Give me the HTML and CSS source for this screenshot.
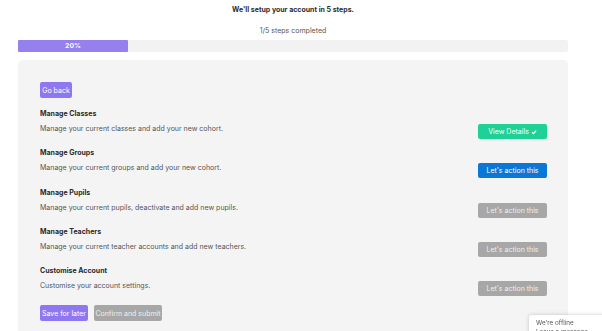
FILE: index.html
```html
<!DOCTYPE html>
<html lang="en">
<head>
    <meta charset="UTF-8">
    <meta name="viewport" content="width=device-width, initial-scale=1.0">
    <title>Account Setup</title>
    <link rel="stylesheet" href="styles.css">
</head>
<body>
    <div class="page">
        <h1 class="title">We'll setup your account in 5 steps.</h1>
        <p class="steps">1/5 steps completed</p>
        <div class="progress">
            <div class="progress-fill" style="width: 20%">20%</div>
        </div>

        <div class="card">
            <button class="btn btn-purple back-button">Go back</button>

            <div class="step">
                <div class="step-text">
                    <h3>Manage Classes</h3>
                    <p>Manage your current classes and add your new cohort.</p>
                </div>
                <button class="btn btn-green step-button">View Details <svg class="check" viewBox="0 0 10 10"><path d="M1.5 5.2 L4 7.6 L8.6 2.6" /></svg></button>
            </div>

            <div class="step">
                <div class="step-text">
                    <h3>Manage Groups</h3>
                    <p>Manage your current groups and add your new cohort.</p>
                </div>
                <button class="btn btn-blue step-button">Let's action this</button>
            </div>

            <div class="step">
                <div class="step-text">
                    <h3>Manage Pupils</h3>
                    <p>Manage your current pupils, deactivate and add new pupils.</p>
                </div>
                <button class="btn btn-grey step-button">Let's action this</button>
            </div>

            <div class="step">
                <div class="step-text">
                    <h3>Manage Teachers</h3>
                    <p>Manage your current teacher accounts and add new teachers.</p>
                </div>
                <button class="btn btn-grey step-button">Let's action this</button>
            </div>

            <div class="step">
                <div class="step-text">
                    <h3>Customise Account</h3>
                    <p>Customise your account settings.</p>
                </div>
                <button class="btn btn-grey step-button">Let's action this</button>
            </div>

            <div class="actions">
                <button class="btn btn-purple save-button">Save for later</button>
                <button class="btn btn-grey submit-button">Confirm and submit</button>
            </div>
        </div>
    </div>

    <div class="chat-widget">
        <p>We're offline</p>
        <p>Leave a message</p>
    </div>
</body>
</html>
```

FILE: styles.css
```css
body {
    font-family: Inter, "Open Sans", sans-serif;
    margin: 0;
    padding: 0;
    background-color: #fff;
    color: #333;
    overflow: hidden;
}
.page {
    width: 550px;
    margin-left: 18px;
}
.title {
    margin: 0;
    padding-top: 5px;
    font-size: 7px;
    line-height: 10px;
    font-weight: 700;
    text-align: center;
    color: #2b2b2b;
}
.steps {
    margin: 11px 0 0;
    font-size: 7px;
    line-height: 10px;
    text-align: center;
    color: #555;
}
.progress {
    margin-top: 4px;
    height: 12px;
    background-color: #f2f2f2;
    border-radius: 2px;
}
.progress-fill {
    height: 12px;
    background-color: #9580ee;
    color: white;
    font-size: 6.8px;
    font-weight: 700;
    line-height: 12px;
    text-align: center;
    border-radius: 1px;
}
.card {
    margin-top: 8px;
    height: 300px;
    background-color: #f4f4f4;
    border-radius: 5px;
    padding: 22px 21px 0 22px;
}
.btn {
    border: none;
    border-radius: 2px;
    color: white;
    font-family: inherit;
    font-size: 7px;
    height: 16px;
    padding: 0;
    cursor: pointer;
}
.btn-purple {
    background-color: #9077f2;
}
.btn-green {
    background-color: #1ed196;
}
.btn-blue {
    background-color: #0a77d6;
}
.btn-grey {
    background-color: #a7a7a7;
    color: #eee;
}
.back-button {
    width: 32px;
    display: block;
    margin-bottom: 11px;
}
.step {
    display: flex;
    justify-content: space-between;
    align-items: flex-start;
    height: 25px;
    margin-bottom: 14.3px;
}
.step-text h3 {
    margin: 0;
    font-size: 7px;
    line-height: 10px;
    font-weight: 700;
    color: #2b2b2b;
}
.step-text p {
    margin: 5px 0 0;
    font-size: 7px;
    line-height: 10px;
    color: #555;
}
.step-button {
    width: 69px;
    height: 15px;
    margin-top: 15px;
    flex-shrink: 0;
}
.check {
    width: 6px;
    height: 6px;
    vertical-align: -0.5px;
}
.check path {
    fill: none;
    stroke: white;
    stroke-width: 2;
}
.actions {
    display: flex;
    gap: 6px;
    margin-top: 2.7px;
}
.save-button {
    width: 48px;
}
.submit-button {
    width: 68px;
}
.chat-widget {
    position: fixed;
    left: 529px;
    top: 315px;
    width: 80px;
    height: 30px;
    background-color: white;
    box-shadow: 0 0 4px rgba(0, 0, 0, 0.2);
    border-radius: 3px;
    padding: 4px 0 0 7px;
    box-sizing: border-box;
}
.chat-widget p {
    margin: 0;
    font-size: 6.3px;
    line-height: 9px;
    color: #555;
}
```
